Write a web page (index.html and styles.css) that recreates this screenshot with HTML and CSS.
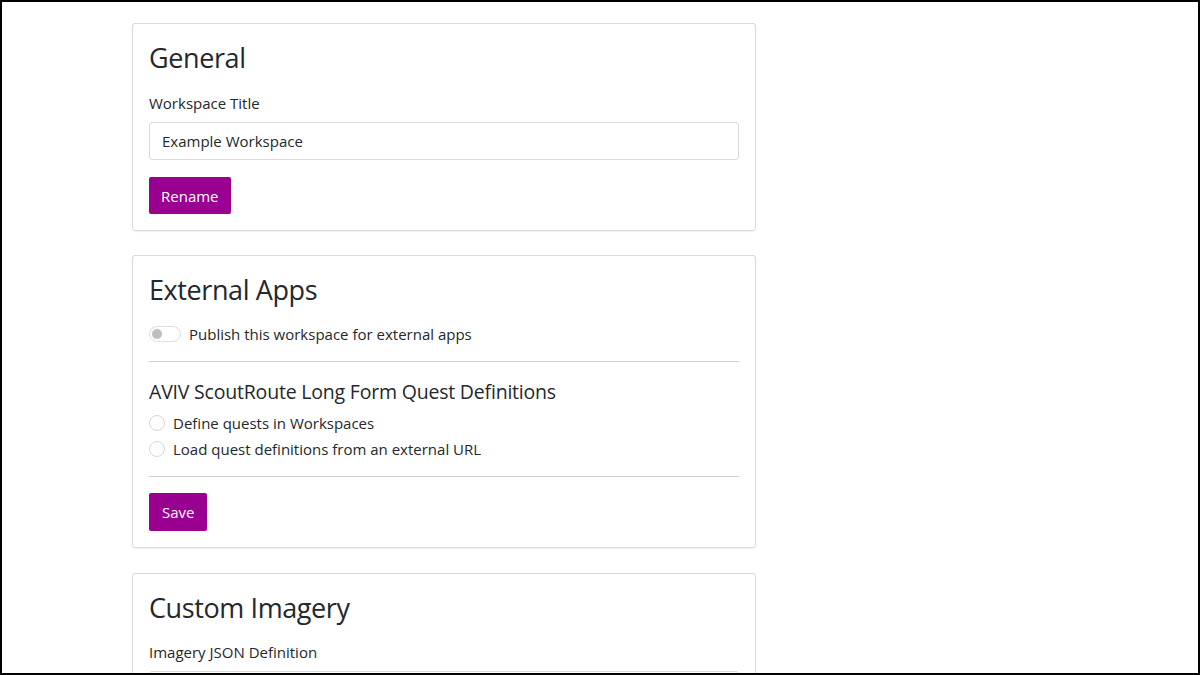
FILE: index.html
```html
<!DOCTYPE html>
<html lang="en">
<head>
<meta charset="utf-8">
<title>Workspace Settings</title>
<link rel="stylesheet" href="styles.css">
</head>
<body>
<div class="frame">
  <main class="content">
    <section class="card">
      <h2 class="card-title">General</h2>
      <label class="field-label" for="ws-title">Workspace Title</label>
      <input class="text-input" id="ws-title" type="text" value="Example Workspace">
      <button class="btn" type="button">Rename</button>
    </section>

    <section class="card card-apps">
      <h2 class="card-title card-title-tight">External Apps</h2>
      <div class="toggle-row">
        <span class="toggle"><span class="toggle-thumb"></span></span>
        <span>Publish this workspace for external apps</span>
      </div>
      <hr class="divider">
      <h3 class="sub-title">AVIV ScoutRoute Long Form Quest Definitions</h3>
      <div class="radio-list">
        <div class="radio-row"><span class="radio"></span><span>Define quests in Workspaces</span></div>
        <div class="radio-row"><span class="radio"></span><span>Load quest definitions from an external URL</span></div>
      </div>
      <hr class="divider divider-tight">
      <button class="btn btn-save" type="button">Save</button>
    </section>

    <section class="card">
      <h2 class="card-title card-title-tight">Custom Imagery</h2>
      <label class="field-label" for="imagery-json">Imagery JSON Definition</label>
      <textarea class="text-area" id="imagery-json"></textarea>
    </section>
  </main>
</div>
</body>
</html>
```

FILE: styles.css
```css
* { box-sizing: border-box; }

html, body {
  margin: 0;
  padding: 0;
  background: #fff;
}

body {
  font-family: "Open Sans", "Noto Sans", sans-serif;
  font-size: 15px;
  color: #24282c;
}

.frame {
  width: 1200px;
  height: 675px;
  border: 2px solid #000;
  overflow: hidden;
}

.content {
  width: 754px;
  padding: 21px 0 0 130px;
  display: flex;
  flex-direction: column;
  gap: 24px;
}

.card {
  width: 624px;
  border: 1px solid #d9d9d9;
  border-radius: 3px;
  box-shadow: 0 1px 1px rgba(0, 0, 0, 0.06);
  padding: 17px 16px 16px;
  display: flex;
  flex-direction: column;
  align-items: flex-start;
}

.card-apps {
  margin-bottom: 1px;
}

.card-title {
  margin: 0 0 17px;
  font-size: 27px;
  font-weight: 400;
  line-height: 34px;
  letter-spacing: -0.4px;
}

.card-title-tight {
  margin-bottom: 16px;
}

.field-label {
  display: block;
  line-height: 22px;
  margin-bottom: 8px;
}

.text-input {
  width: 100%;
  height: 38px;
  border: 1px solid #dcdcdc;
  border-radius: 3px;
  padding: 0 12px;
  font: inherit;
  color: #24282c;
  margin-bottom: 17px;
}

.text-area {
  display: block;
  width: 100%;
  height: 80px;
  border: 1px solid #dcdcdc;
  border-radius: 3px;
  resize: none;
  font: inherit;
}

.btn {
  height: 37px;
  padding: 0 12px;
  background: #9a0090;
  color: #fff;
  border: none;
  border-radius: 2px;
  font: inherit;
}

.btn-save {
  height: 38px;
  padding: 0 13px;
}

.toggle-row {
  display: flex;
  align-items: center;
  gap: 8px;
  line-height: 22px;
}

.toggle {
  width: 32px;
  height: 16px;
  border: 1px solid #dedede;
  border-radius: 8px;
  display: flex;
  align-items: center;
  padding-left: 2px;
}

.toggle-thumb {
  width: 10px;
  height: 10px;
  border-radius: 50%;
  background: #bdbdbd;
}

.divider {
  width: 100%;
  border: none;
  border-top: 1px solid #cfcfcf;
  margin: 16px 0 18px;
}

.divider-tight {
  margin-bottom: 16px;
}

.sub-title {
  margin: 0 0 8px;
  font-size: 19.5px;
  font-weight: 400;
  line-height: 24px;
  letter-spacing: -0.2px;
}

.radio-list {
  display: flex;
  flex-direction: column;
  gap: 4px;
}

.radio-row {
  display: flex;
  align-items: center;
  gap: 8px;
  line-height: 22px;
}

.radio {
  width: 16px;
  height: 16px;
  border: 1px solid #d6d6d6;
  border-radius: 50%;
}
```
